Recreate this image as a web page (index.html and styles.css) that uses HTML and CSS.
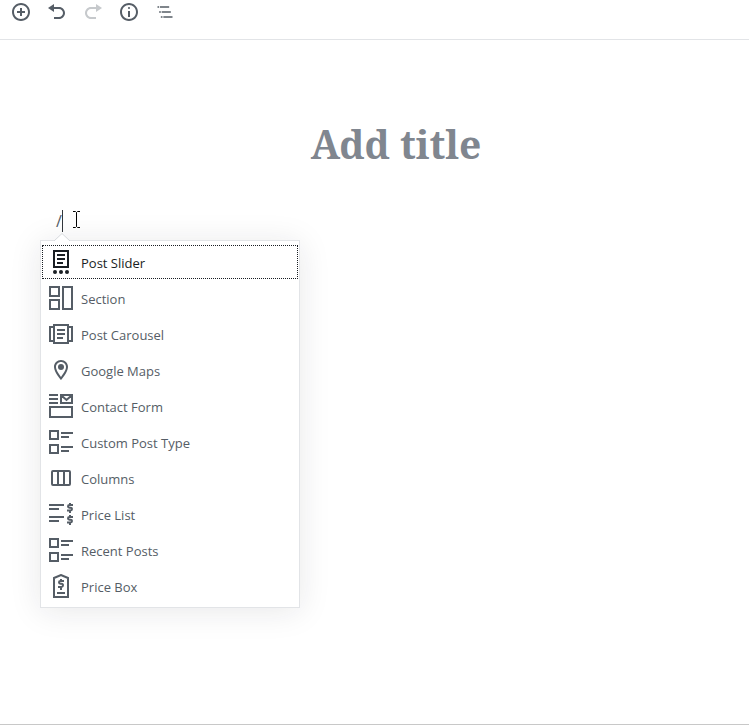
FILE: index.html
```html
<!DOCTYPE html>
<html lang="en">
  <head>
    <meta charset="utf-8">
    <link rel="stylesheet" href="styles.css">
    <title>Add title</title>
  </head>
  <body>
    <div class="toolbar">
      <button type="button" aria-label="Add block"><svg width="20" height="20" viewBox="0 0 20 20"><path d="M10 1c-5 0-9 4-9 9s4 9 9 9 9-4 9-9-4-9-9-9zm0 16c-3.9 0-7-3.1-7-7s3.1-7 7-7 7 3.1 7 7-3.1 7-7 7zm1-11H9v3H6v2h3v3h2v-3h3V9h-3V6z"/></svg></button>
      <button type="button" aria-label="Undo"><svg width="20" height="20" viewBox="0 0 20 20"><path d="M12 5H7V2L1 6l6 4V7h5c2.2 0 4 1.8 4 4s-1.8 4-4 4H7v2h5c3.3 0 6-2.7 6-6s-2.7-6-6-6z"/></svg></button>
      <button type="button" aria-label="Redo" disabled><svg width="20" height="20" viewBox="0 0 20 20"><path d="M8 5h5V2l6 4-6 4V7H8c-2.2 0-4 1.8-4 4s1.8 4 4 4h5v2H8c-3.3 0-6-2.7-6-6s2.7-6 6-6z"/></svg></button>
      <button type="button" aria-label="Content structure"><svg width="20" height="20" viewBox="0 0 20 20"><path d="M9 15h2V9H9v6zm1-10c-.5 0-1 .5-1 1s.5 1 1 1 1-.5 1-1-.5-1-1-1zm0-4c-5 0-9 4-9 9s4 9 9 9 9-4 9-9-4-9-9-9zm0 16c-3.9 0-7-3.1-7-7s3.1-7 7-7 7 3.1 7 7-3.1 7-7 7z"/></svg></button>
      <button type="button" aria-label="Block navigation"><svg width="20" height="20" viewBox="0 0 24 24"><path d="M5 5H3v2h2V5zm3 8h11v-2H8v2zm9-8H6v2h11V5zM7 11H5v2h2v-2zm0 8h2v-2H7v2zm3-2v2h11v-2H10z"/></svg></button>
    </div>

    <main class="editor">
      <h1>Add title</h1>
      <div class="block">
        <p class="paragraph">/<span class="caret"></span></p>
        <svg class="pointer" width="9" height="17" viewBox="0 0 9 17"><path d="M1 .5h2.5l1 1 1-1H8M4.500 1.500v14M1 16.500h2.500l1-1 1 1H8"/></svg>
        <div class="popover">
          <svg class="arrow" width="16" height="8" viewBox="0 0 16 8"><path d="M0 8l8-8 8 8z"/><path class="edge" d="M0 8l8-7.500 8 7.500"/></svg>
          <button type="button" class="selected">
            <svg width="24" height="24" viewBox="0 0 24 24"><path d="M4 0h16v18H4zM6 2v14h12V2zM8 4h8v2H8zM8 8h8v2H8zM8 12h6v2H8z" fill-rule="evenodd"/><circle cx="6" cy="22" r="2"/><circle cx="12" cy="22" r="2"/><circle cx="18" cy="22" r="2"/></svg>
            <span>Post Slider</span>
          </button>
          <button type="button">
            <svg width="24" height="24" viewBox="0 0 24 24"><path class="line" d="M1 1h9v9H1zM1 14h9v9H1zM14 1h9v22h-9z"/></svg>
            <span>Section</span>
          </button>
          <button type="button">
            <svg width="24" height="24" viewBox="0 0 24 24"><path class="line" d="M5 3h14v18H5zM5 5H1v14h4M19 5h4v14h-4M8 8h8M8 12h8M8 16h6"/></svg>
            <span>Post Carousel</span>
          </button>
          <button type="button">
            <svg width="24" height="24" viewBox="0 0 24 24"><path d="M12 2C8.130 2 5 5.130 5 9c0 5.250 7 13 7 13s7-7.750 7-13c0-3.870-3.130-7-7-7zM7 9c0-2.760 2.240-5 5-5s5 2.240 5 5c0 2.880-2.880 7.190-5 9.880C9.920 16.210 7 11.850 7 9z"/><circle cx="12" cy="9" r="3"/></svg>
            <span>Google Maps</span>
          </button>
          <button type="button">
            <svg width="24" height="24" viewBox="0 0 24 24"><path class="line" d="M0 1h9M0 5h9M0 9h9M12 1h11v8H12zM13 2l4.500 4L22 2M1 13h22v10H1z"/></svg>
            <span>Contact Form</span>
          </button>
          <button type="button">
            <svg width="24" height="24" viewBox="0 0 24 24"><path class="line" d="M1 1h8v8H1zM1 15h8v8H1zM12 3h12M12 7h8M12 17h12M12 21h8"/></svg>
            <span>Custom Post Type</span>
          </button>
          <button type="button">
            <svg width="24" height="24" viewBox="0 0 24 24"><rect class="line" x="3" y="5" width="18" height="14" rx="1"/><path class="line" d="M9 5v14M15 5v14"/></svg>
            <span>Columns</span>
          </button>
          <button type="button">
            <svg width="24" height="24" viewBox="0 0 24 24"><path class="line" d="M0 3h15M0 7h10M0 15h15M0 19h10M24 3h-3.500q-1.500 0-1.500 1.300t1.500 1.400h1q1.500 0 1.500 1.400T21.500 8.500H18M21 1v2M21 8.500v2.500M24 15h-3.500q-1.500 0-1.500 1.300t1.500 1.400h1q1.500 0 1.500 1.400t-1.500 1.400H18M21 13v2M21 20.500V23"/></svg>
            <span>Price List</span>
          </button>
          <button type="button">
            <svg width="24" height="24" viewBox="0 0 24 24"><path class="line" d="M1 1h8v8H1zM1 15h8v8H1zM12 3h12M12 7h8M12 17h12M12 21h8"/></svg>
            <span>Recent Posts</span>
          </button>
          <button type="button">
            <svg width="24" height="24" viewBox="0 0 24 24"><path class="line" d="M5 23V4l7-3 7 3v19zM8 19h8M15 7h-3.500Q10 7 10 8.300t1.500 1.500h1q1.500 0 1.500 1.500T12.500 13H9M12 5v2M12 13v3"/></svg>
            <span>Price Box</span>
          </button>
        </div>
      </div>
    </main>
  </body>
</html>
```

FILE: styles.css
```css
* {
  box-sizing: border-box;
}
body {
  margin: 0;
  min-height: 100vh;
  display: flex;
  flex-direction: column;
  background-color: #fff;
  border-bottom: 1px solid #c8c8c8;
  color: #555d66;
  font-family: "Open Sans", "Noto Sans", sans-serif;
  font-size: 13px;
}
button {
  border: none;
  padding: 0;
  background: none;
  color: inherit;
  font: inherit;
}
svg {
  display: block;
  fill: currentColor;
}

.toolbar {
  height: 40px;
  padding: 2px 3px;
  display: flex;
  align-items: flex-start;
  border-bottom: 1px solid #e2e4e7;
}
.toolbar button {
  width: 36px;
  display: flex;
  justify-content: center;
}
.toolbar button:disabled {
  color: #c6c9cc;
}

.editor {
  padding: 76px 40px 0;
}
h1 {
  margin: 0;
  padding-left: 43px;
  text-align: center;
  font-family: "Noto Serif", "DejaVu Serif Condensed", "DejaVu Serif", serif;
  font-size: 39px;
  line-height: 56px;
  font-weight: bold;
  color: #80868f;
}

.block {
  position: relative;
  padding-top: 37px;
}
.paragraph {
  margin: 0;
  padding-left: 16px;
  height: 24px;
  display: flex;
  align-items: center;
  font-size: 16px;
}
.caret {
  width: 1px;
  height: 22px;
  background-color: #32373c;
}
.pointer {
  position: absolute;
  left: 32px;
  top: 39px;
  fill: none;
  stroke: #000;
}

.popover {
  position: relative;
  width: 260px;
  margin-top: 7px;
  padding: 3px 0;
  border: 1px solid #e2e4e7;
  background-color: #fff;
  box-shadow: 0 3px 30px rgba(25, 30, 35, 0.1);
}
.arrow {
  position: absolute;
  left: 13px;
  top: -8px;
  fill: #fff;
}
.arrow .edge {
  fill: none;
  stroke: #d5d8dc;
}
.popover button {
  width: 100%;
  height: 36px;
  padding: 0 8px;
  display: flex;
  align-items: center;
  gap: 8px;
}
.popover button span {
  padding-top: 2px;
}
.popover .selected {
  color: #191e23;
  outline: 1px dotted #191e23;
  outline-offset: -2px;
}
.line {
  fill: none;
  stroke: currentColor;
  stroke-width: 2;
}
```
